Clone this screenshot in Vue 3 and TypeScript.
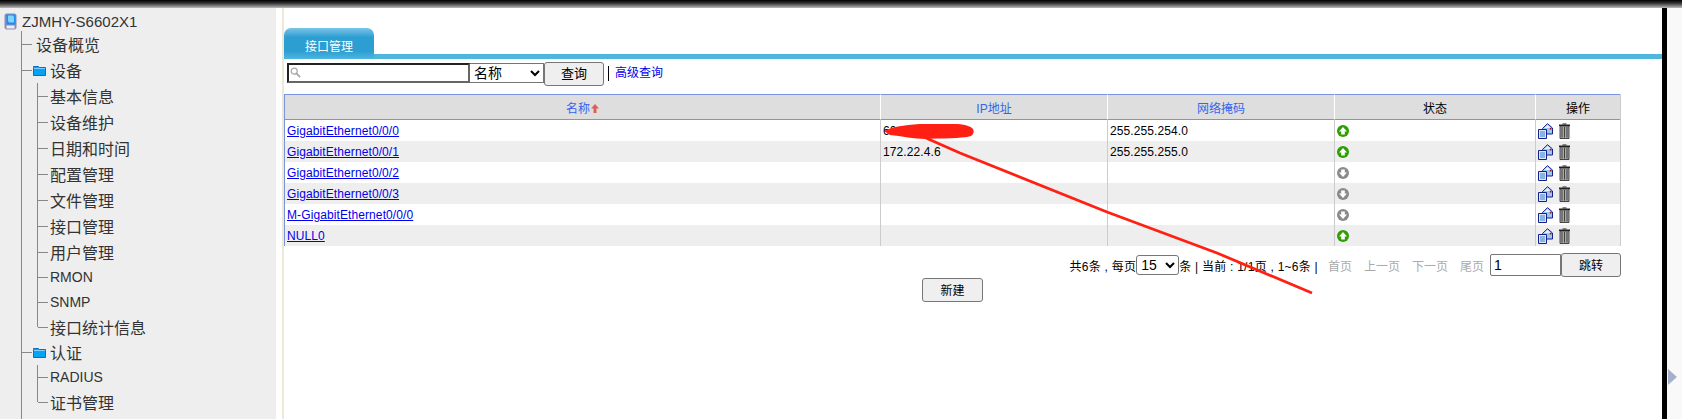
<template>
  <div class="page">
    <div class="topbar"></div>
    <div class="desk">
      <aside class="sidebar">
        <div class="root">
          <svg class="root-icon" width="13" height="17" viewBox="0 0 13 17">
            <path d="M2 .5h9l1.5 1.5v13L11 16.5H2L.5 15V2z" fill="#8d8db4" />
            <path d="M2.5 1.5h8l1 1v9h-9z" fill="#1f8df0" />
            <path d="M4 2.5h5l1 1v6H5L4 8z" fill="#7fd4ff" />
            <path d="M2.5 12.5h8v3h-8z" fill="#ecebf4" />
          </svg>
          <span>ZJMHY-S6602X1</span>
        </div>
        <ul class="tree">
          <li class="node"><span class="tick"></span>设备概览</li>
          <li v-for="group in groups" :key="group.name">
            <div class="node folder-node">
              <span class="tick short"></span>
              <svg class="folder" width="13" height="11" viewBox="0 0 13 11">
                <path d="M.5 2.5V1.5h5l1 1h6v8H.5z" fill="#06a2f5" stroke="#0a6fc4" />
                <path d="M1 3.5h11" stroke="#7fd0ff" />
              </svg>
              <span class="folder-label">{{ group.name }}</span>
            </div>
            <ul class="sub">
              <li
                v-for="(item, i) in group.items"
                :key="item"
                class="leaf"
                :class="{ last: i === group.items.length - 1, latin: /^[A-Z]+$/.test(item) }"
              >
                <span class="tick"></span>{{ item }}
              </li>
            </ul>
          </li>
        </ul>
      </aside>
      <div class="gutter"></div>

      <main class="main">
        <div class="tabs"><div class="tab">接口管理</div></div>

        <div class="search">
          <div class="search-box">
            <svg class="lens" width="11" height="11" viewBox="0 0 11 11" fill="none" stroke="#aaa" stroke-width="1.3">
              <circle cx="4.2" cy="4.2" r="3" />
              <path d="M6.5 6.5l3.6 3.6" stroke-width="1.8" />
            </svg>
            <input class="search-input" type="text" />
          </div>
          <select class="search-select"><option>名称</option></select>
          <button class="btn query">查询</button>
          <span class="sep"></span>
          <a class="adv" href="#">高级查询</a>
        </div>

        <table class="grid">
          <colgroup>
            <col style="width: 595px" />
            <col style="width: 227px" />
            <col style="width: 227px" />
            <col style="width: 201px" />
            <col />
          </colgroup>
          <thead>
            <tr>
              <th class="sortable">名称<svg class="sort" width="8" height="9" viewBox="0 0 8 9"><path d="M4 0L8 4.5H5.5V9h-3V4.5H0z" fill="#d9605a" /></svg></th>
              <th class="sortable">IP地址</th>
              <th class="sortable">网络掩码</th>
              <th>状态</th>
              <th>操作</th>
            </tr>
          </thead>
          <tbody>
            <tr v-for="row in rows" :key="row.name">
              <td><a href="#">{{ row.name }}</a></td>
              <td>{{ row.ip }}</td>
              <td>{{ row.mask }}</td>
              <td>
                <svg class="state" width="12" height="12" viewBox="0 0 12 12">
                  <circle cx="6" cy="6" r="6" :fill="row.up ? '#2f9e00' : '#8a8a8a'" />
                  <path v-if="row.up" d="M6 2L10 6.4H7.8V9.6H4.2V6.4H2z" fill="#fff" />
                  <path v-else d="M6 10L2 5.6h2.2V2.4h3.6v3.2H10z" fill="#fff" />
                </svg>
              </td>
              <td class="ops">
                <svg width="15" height="16" viewBox="0 0 15 16">
                  <path d="M4.5 5.5L9.5.7 14.5 5v6H4.5z" fill="#9cc6ee" stroke="#12208c" />
                  <path d="M6 5l3.5-3L13 5z" fill="#e4f0fb" />
                  <path d="M11.8 4.8h1.7v1.7h-1.7z" fill="#a80f1c" />
                  <path d="M.5 6.5h8v9h-8z" fill="#d8e8f8" stroke="#12208c" />
                  <path d="M2 9h5M2 11h5M2 13h5" stroke="#3a7fd0" />
                </svg>
                <svg class="trash" width="11" height="16" viewBox="0 0 11 16">
                  <path d="M0 1.5h11v1.5H0z" fill="#222" />
                  <path d="M3.5.3h4v1.5h-4z" fill="#555" />
                  <path d="M1 3h9v12.5H1z" fill="#aaa" stroke="#222" stroke-width=".8" />
                  <path d="M3 4v10.5M5.5 4v10.5M8 4v10.5" stroke="#333" stroke-width=".9" />
                </svg>
              </td>
            </tr>
          </tbody>
        </table>

        <div class="pager">
          <span class="txt">共6条 , 每页</span>
          <select class="size"><option>15</option></select>
          <span class="txt">条 | 当前 : 1/1页 , 1~6条 |</span>
          <span class="off first">首页</span>
          <span class="off">上一页</span>
          <span class="off">下一页</span>
          <span class="off">尾页</span>
          <input class="jump" type="text" value="1" />
          <button class="btn go">跳转</button>
        </div>

        <div class="actions"><button class="btn create">新建</button></div>

        <!-- hand drawn annotation on top of the screenshot -->
        <svg class="scribble" width="460" height="190" viewBox="0 0 460 190">
          <path d="M4 7C15 2 30 0 45 0 60-1 80-1 88 2c7 2 7 7 3 10-10 3-30 2-46 3-10 0-24-3-35-4z" fill="#ff2013" />
          <path d="M46 14L80 29 227 88 337 129 432 169" fill="none" stroke="#ff2013" stroke-width="2.8" />
        </svg>
      </main>

      <div class="blackbar"></div>
      <div class="edge">
        <svg class="edge-arrow" width="9" height="16" viewBox="0 0 9 16"><path d="M0 0l9 8-9 8z" fill="#a5b1cc" /></svg>
      </div>
    </div>
  </div>
</template>

<script setup lang="ts">
interface PortRow {
  name: string;
  ip: string;
  mask: string;
  up: boolean;
}

const groups = [
  {
    name: '设备',
    items: ['基本信息', '设备维护', '日期和时间', '配置管理', '文件管理', '接口管理', '用户管理', 'RMON', 'SNMP', '接口统计信息'],
  },
  { name: '认证', items: ['RADIUS', '证书管理'] },
];

const rows: PortRow[] = [
  { name: 'GigabitEthernet0/0/0', ip: '60', mask: '255.255.254.0', up: true },
  { name: 'GigabitEthernet0/0/1', ip: '172.22.4.6', mask: '255.255.255.0', up: true },
  { name: 'GigabitEthernet0/0/2', ip: '', mask: '', up: false },
  { name: 'GigabitEthernet0/0/3', ip: '', mask: '', up: false },
  { name: 'M-GigabitEthernet0/0/0', ip: '', mask: '', up: false },
  { name: 'NULL0', ip: '', mask: '', up: true },
];
</script>

<style>
html, body { margin: 0; background: #fff; overflow: hidden; }
</style>

<style scoped>
.page { width: 1682px; height: 419px; display: flex; flex-direction: column; overflow: hidden; font-family: "Liberation Sans", "Noto Sans CJK SC", sans-serif; font-size: 12px; color: #000; }
.topbar { height: 8px; flex: none; background: linear-gradient(#000, #333 40%, #bbb); }
.desk { flex: 1; display: flex; min-height: 0; }

.sidebar { width: 276px; flex: none; background: #eee; color: #333; font-size: 16px; overflow: hidden; }
.root { height: 26px; display: flex; align-items: center; padding-left: 4px; gap: 5px; font-size: 15px; }
.tree, .sub { list-style: none; margin: 0; padding: 0; }
.tree { margin: -3px 0 0 21px; border-left: 1px solid #888; height: 400px; }
.node { height: 26px; display: flex; align-items: center; padding-left: 14px; position: relative; }
.folder-node { padding-left: 11px; }
.folder-label { margin-left: 4px; }
.sub { margin-left: 15px; border-left: 1px solid #888; }
.leaf { height: 26px; display: flex; align-items: center; padding-left: 12px; position: relative; }
.leaf.latin { height: 24.5px; font-size: 14px; }
.leaf.last { height: 25px; }
.leaf.last::after { content: ""; position: absolute; left: -1px; top: 50%; width: 1px; height: 50%; background: #eee; }
.tick { position: absolute; left: 0; top: 50%; width: 10px; height: 1px; background: #888; }
.folder { flex: none; }

.gutter { width: 8px; flex: none; background: linear-gradient(90deg, #fff 6px, #ece9d8 6px); }

.main { width: 1378px; flex: none; position: relative; background: #fff; }
.tabs { margin-top: 20px; height: 26px; border-bottom: 5px solid #4fb6de; }
.tab { width: 90px; height: 31px; box-sizing: border-box; border-radius: 7px 7px 0 0; background: linear-gradient(#7cc5e6, #2d9ed2 30%, #2d9ed2 75%, #4fb6de); color: #fff; font-size: 12px; text-align: center; line-height: 38px; }

.search { display: flex; align-items: flex-start; height: 24px; margin: 3px 0 0 3px; }
.search-box { position: relative; height: 20px; margin-top: 1px; }
.lens { position: absolute; left: 3px; top: 4px; }
.search-input { display: block; width: 183px; height: 20px; box-sizing: border-box; padding: 0 0 0 14px; border: 2px solid; border-color: #222 #666 #666 #222; outline: none; background: transparent; }
.search-select { width: 74px; height: 20px; margin-top: 1px; border: 1px solid #767676; border-left: none; background: #fff; font: 14px "Liberation Sans", "Noto Sans CJK SC", sans-serif; color: #000; }
.btn { border: 1px solid #767676; border-radius: 3px; background: #efefef; color: #000; font: 13px "Liberation Sans", "Noto Sans CJK SC", sans-serif; padding: 0 0 2px; }
.query { width: 60px; height: 24px; padding-bottom: 4px; }
.sep { width: 1px; height: 15px; background: #000; margin: 4px 6px 0 4px; }
.adv { color: #0000ee; font-size: 12px; line-height: 23px; text-decoration: none; }

.grid { width: 1337px; margin-top: 8px; border-collapse: separate; border-spacing: 0; table-layout: fixed; border-left: 1px solid #7b93d8; border-right: 1px solid #ccc; }
.grid th { height: 24px; padding: 0; background: #dedede; border-top: 1px solid #7b93d8; border-bottom: 1px solid #7b93d8; border-left: 1px solid #fff; font-weight: normal; font-size: 12px; text-align: center; }
.grid th:first-child { border-left: none; }
.sortable { color: #3366ee; }
.sort { margin-left: 1px; }
.grid td { height: 21px; padding: 0 0 0 2px; border-left: 1px solid #ccc; font-size: 12px; letter-spacing: 0.1px; white-space: nowrap; vertical-align: middle; box-sizing: border-box; }
.grid td:first-child { border-left: none; }
.grid a { color: #0000ee; }
.grid tbody tr:nth-child(even) td { background: #eee; }
.state { display: block; }
.ops svg { vertical-align: middle; }
.trash { margin-left: 6px; }

.pager { width: 1337px; height: 26px; margin-top: 6px; display: flex; justify-content: flex-end; align-items: center; font-size: 12px; }
.txt { letter-spacing: 0.25px; }
.size { width: 43px; height: 20px; border: 1px solid #767676; border-radius: 3px; background: #fff; font: 14px "Liberation Sans", sans-serif; color: #000; }
.off { color: #aaa; margin-left: 12px; }
.off.first { margin-left: 10px; }
.jump { width: 71px; height: 22px; box-sizing: border-box; border: 1px solid #767676; border-radius: 2px 0 0 2px; margin-left: 6px; padding: 0 3px; font: 14px "Liberation Sans", sans-serif; outline: none; }
.go { width: 60px; height: 24px; font-size: 12px; }

.actions { width: 1337px; display: flex; justify-content: center; }
.create { width: 61px; height: 24px; font-size: 12px; }

.scribble { position: absolute; left: 596px; top: 116px; }

.blackbar { width: 5px; flex: none; background: #000; }
.edge { flex: 1; position: relative; background: #f9f9f9; }
.edge-arrow { position: absolute; left: 1px; top: 361px; }
</style>
